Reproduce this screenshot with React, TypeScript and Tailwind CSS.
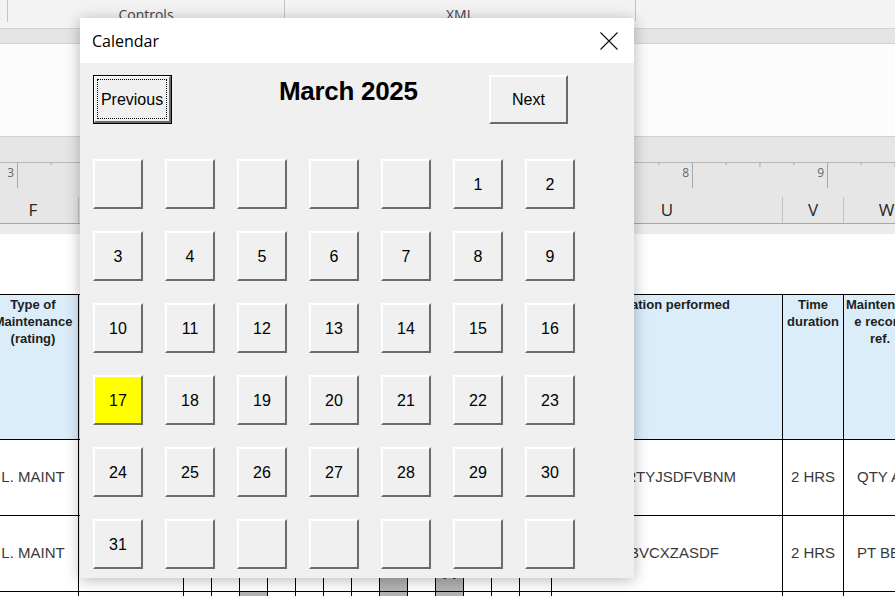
import React from 'react'

type Col = { letter: string; cls: string }

const COLS: Col[] = [
  { letter: 'F', cls: 'w-[91px] -ml-[12px]' },
  { letter: 'G', cls: 'w-[105px]' },
  ...'HIJKLMNOPQRS'.split('').map((l) => ({ letter: l, cls: 'w-[28px]' })),
  { letter: 'T', cls: 'w-[32px]' },
  { letter: 'U', cls: 'w-[231px]' },
  { letter: 'V', cls: 'w-[61px]' },
  { letter: 'W', cls: 'w-[86px]' },
]

// March 2025 starts on a Saturday, week starts Monday
const DAYS: (number | null)[] = [
  ...Array(5).fill(null),
  ...Array.from({ length: 31 }, (_, i) => i + 1),
  ...Array(6).fill(null),
]

function Ruler() {
  const ticks = []
  for (let i = -1; i < 27; i++) {
    const x = 17 + 33.75 * i
    if (i % 4 === 0) {
      const n = 3 + i / 4
      ticks.push(
        <g key={i}>
          <line x1={x + 0.5} y1="0" x2={x + 0.5} y2="26" stroke="#a9a9a9" />
          {/* numbers 4-7 sit under the dialog */}
          {(n < 4 || n > 7) && (
            <text x={x - 3} y="15" textAnchor="end" fontSize="12" fill="#666" fontFamily="Open Sans, sans-serif">
              {n}
            </text>
          )}
        </g>
      )
    } else {
      ticks.push(<line key={i} x1={x + 0.5} y1="0" x2={x + 0.5} y2={i % 2 === 0 ? 5 : 3} stroke="#a9a9a9" />)
    }
  }
  return (
    <svg width="895" height="28" className="block">
      <line x1="0" y1="0.5" x2="895" y2="0.5" stroke="#b9b9b9" />
      {ticks}
    </svg>
  )
}

function headerCell(i: number) {
  if (i === 0)
    return (
      <div className="pt-[1px] text-center">
        Type of
        <br />
        Maintenance
        <br />
        (rating)
      </div>
    )
  if (i === 15) return <div className="pt-[1px] pr-[52px] text-right whitespace-nowrap">Operation performed</div>
  if (i === 16)
    return (
      <div className="pt-[1px] text-center">
        Time
        <br />
        duration
      </div>
    )
  if (i === 17)
    return (
      <div className="ml-[2px] w-[68px] pt-[1px] text-center">
        Maintenanc
        <br />
        e record
        <br />
        ref.
      </div>
    )
  return null
}

function DataRow({ op, opCls, ref1, gray, x }: { op: string; opCls: string; ref1: string; gray: number[]; x?: boolean }) {
  return (
    <div className="flex h-[76px] border-b border-black text-[15px] text-[#3a3a3a]">
      {COLS.map((c, i) => (
        <div
          key={c.letter}
          className={`${c.cls} shrink-0 overflow-hidden border-r border-black flex items-center ${gray.includes(i) ? 'bg-[#b3b3b3]' : ''}`}
        >
          {i === 0 && <div className="w-full text-center">L. MAINT</div>}
          {i === 11 && x && <div className="w-full self-end pb-[4px] text-center text-[20px] text-[#222]">X</div>}
          {i === 15 && <div className={`w-full whitespace-nowrap text-right ${opCls}`}>{op}</div>}
          {i === 16 && <div className="w-full text-center">2 HRS</div>}
          {i === 17 && <div className="w-full whitespace-nowrap pl-[13px]">{ref1}</div>}
        </div>
      ))}
    </div>
  )
}

function DayButton({ day }: { day: number | null }) {
  return (
    <div
      className={`flex h-[50px] w-[50px] items-center justify-center border-2 border-t-white border-l-white border-r-[#6b6b6b] border-b-[#6b6b6b] pt-[1px] text-[16px] text-black ${
        day === 17 ? 'bg-[#ffff00]' : 'bg-[#f0f0f0]'
      }`}
    >
      {day ?? ''}
    </div>
  )
}

function CalendarDialog() {
  return (
    <div className="absolute left-[80px] top-[18px] flex h-[560px] w-[554px] flex-col bg-[#f0f0f0] shadow-[0_2px_14px_rgba(0,0,0,0.28)] font-['Liberation_Sans',Arial,sans-serif]">
      <div className="flex h-[45px] shrink-0 items-center justify-between bg-white pl-[12px] pr-[16px]">
        <span className="text-[16px] text-black font-['Open_Sans',sans-serif]">Calendar</span>
        <svg width="18" height="18" viewBox="0 0 18 18">
          <path d="M0.5 0.5 L17.5 17.5 M17.5 0.5 L0.5 17.5" stroke="#111" strokeWidth="1.1" fill="none" />
        </svg>
      </div>

      <div className="pl-[13px] pt-[12px]">
        <div className="flex h-[49px] items-start">
          <div className="h-[49px] w-[79px] border border-black bg-[#f0f0f0]">
            <div className="h-full border-t border-l border-white border-r-2 border-b-2 border-r-[#6b6b6b] border-b-[#6b6b6b] p-[2px]">
              <div className="flex h-full items-center justify-center border border-dotted border-black pt-[2px] text-[16px] text-black">
                Previous
              </div>
            </div>
          </div>
          <div className="w-[317px] pl-[107px]">
            <div className="mt-[1px] whitespace-nowrap text-[26px] font-bold leading-[30px] tracking-[-0.3px] text-black">
              March 2025
            </div>
          </div>
          <div className="flex h-[49px] w-[79px] items-center justify-center border-2 border-t-white border-l-white border-r-[#6b6b6b] border-b-[#6b6b6b] pt-[1px] text-[16px] text-black">
            Next
          </div>
        </div>

        <div className="mt-[35px] grid grid-cols-[repeat(7,50px)] gap-[22px]">
          {DAYS.map((d, i) => (
            <DayButton key={i} day={d} />
          ))}
        </div>
      </div>
    </div>
  )
}

export default function App() {
  return (
    <div className="relative h-[596px] w-[895px] overflow-hidden bg-white">
      {/* ribbon */}
      <div className="flex h-[28px] items-start bg-[#f3f3f3] text-[14px] text-[#444] font-['Open_Sans',sans-serif]">
        <div className="h-[22px] w-[8px] border-r border-[#c4c4c4]" />
        <div className="w-[276px] pt-[6px] text-center leading-[18px]">Controls</div>
        <div className="h-[21px] w-px bg-[#c4c4c4]" />
        <div className="w-[350px] pt-[6px] text-center leading-[18px]">XML</div>
        <div className="h-[21px] w-px bg-[#c4c4c4]" />
      </div>
      <div className="h-[16px] border-y border-[#d3d3d3] bg-[#e5e5e5]" />
      <div className="h-[92px] bg-[#fcfcfc]" />

      {/* ruler + column letters */}
      <div className="border-t border-b border-[#d0d0d0] border-b-[#a8a8a8] bg-[#e6e6e6]">
        <div className="h-[25px]" />
        <Ruler />
        <div className="flex h-[33px] items-end text-[17px] text-[#262626] font-['Open_Sans',sans-serif]">
          {COLS.map((c) => (
            <div key={c.letter} className={`${c.cls} shrink-0`}>
              <div className="flex h-[26px] items-center justify-center border-r border-[#c2c2c2]">
                {c.letter}
              </div>
            </div>
          ))}
        </div>
      </div>
      <div className="h-[10px] bg-[#ececec]" />
      <div className="h-[60px] bg-white" />

      {/* sheet table */}
      <div className="border-t border-black font-['Liberation_Sans',Arial,sans-serif]">
        <div className="flex h-[145px] border-b border-black bg-[#dcedfa] text-[13px] font-bold leading-[17px] text-[#1e1e1e]">
          {COLS.map((c, i) => (
            <div key={c.letter} className={`${c.cls} shrink-0 overflow-hidden border-r border-black`}>
              {headerCell(i)}
            </div>
          ))}
        </div>
        <DataRow op="QWERTYJSDFVBNM" opCls="pr-[46px]" ref1="QTY ABC" gray={[]} />
        <DataRow op="MNBVCXZASDF" opCls="pr-[63px]" ref1="PT BEN" gray={[9, 11]} x />
        <div className="flex h-[76px]">
          {COLS.map((c, i) => (
            <div
              key={c.letter}
              className={`${c.cls} shrink-0 border-r border-black ${[4, 9, 11].includes(i) ? 'bg-[#b3b3b3]' : ''}`}
            />
          ))}
        </div>
      </div>

      <CalendarDialog />
    </div>
  )
}
